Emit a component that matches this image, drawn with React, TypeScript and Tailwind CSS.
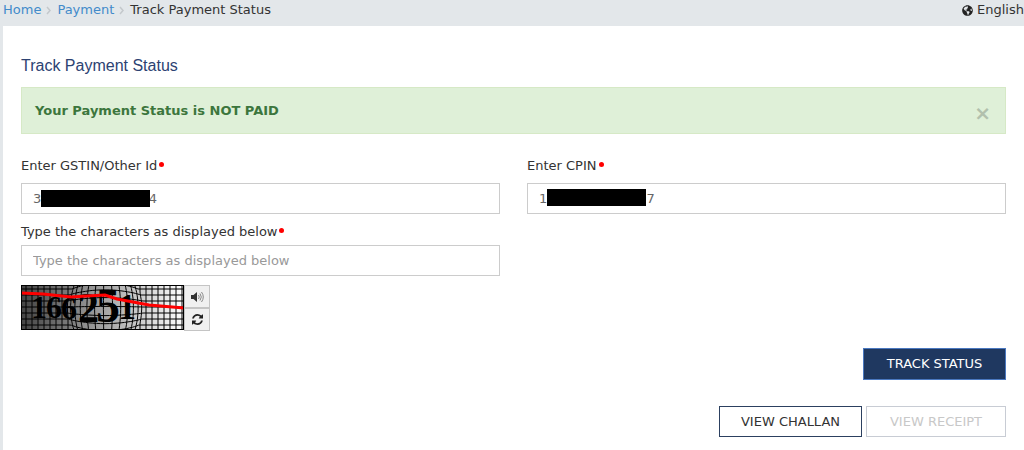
import * as React from "react";
import { FaGlobeAmericas } from "react-icons/fa";

const CAPTCHA_WIDTH = 163;
const CAPTCHA_HEIGHT = 45;
const CELL = 6;

// Bulges a grid point away from the lens in the middle of the captcha.
function warp(x: number, y: number): string {
  const dx = x - 84;
  const dy = y - 23;
  const distance = Math.hypot(dx, dy);
  const radius = 38;
  if (distance >= radius) return `${x},${y}`;
  const push = 1 + 0.6 * (1 - distance / radius);
  return `${(84 + dx * push).toFixed(1)},${(23 + dy * push).toFixed(1)}`;
}

function gridLines(): string[] {
  const lines: string[] = [];
  for (let x = 5; x < CAPTCHA_WIDTH; x += CELL) {
    const points: string[] = [];
    for (let y = 0; y <= CAPTCHA_HEIGHT; y += 3) points.push(warp(x, y));
    lines.push(points.join(" "));
  }
  for (let y = 4; y < CAPTCHA_HEIGHT; y += CELL) {
    const points: string[] = [];
    for (let x = 0; x <= CAPTCHA_WIDTH; x += 3) points.push(warp(x, y));
    lines.push(points.join(" "));
  }
  return lines;
}

const glyphs = [
  { char: "1", x: 10, y: 33, size: 32 },
  { char: "6", x: 25, y: 33, size: 32 },
  { char: "6", x: 40, y: 34, size: 32 },
  { char: "2", x: 57, y: 37, size: 42 },
  { char: "5", x: 75, y: 37, size: 48 },
  { char: "1", x: 97, y: 34, size: 36 },
];

function CaptchaImage() {
  return (
    <svg
      role="img"
      aria-label="Captcha"
      className="overflow-visible"
      width={CAPTCHA_WIDTH}
      height={CAPTCHA_HEIGHT}
      viewBox={`0 0 ${CAPTCHA_WIDTH} ${CAPTCHA_HEIGHT}`}
    >
      <defs>
        <linearGradient id="captcha-shade">
          <stop offset="0" stopColor="#444" />
          <stop offset="1" stopColor="#fff" />
        </linearGradient>
        <clipPath id="captcha-frame">
          <rect width="163" height="45" />
        </clipPath>
      </defs>
      <rect width="163" height="45" fill="url(#captcha-shade)" />
      <g clipPath="url(#captcha-frame)">
        {gridLines().map((points) => (
          <polyline key={points} points={points} fill="none" stroke="#000" />
        ))}
      </g>
      {glyphs.map((glyph) => (
        <text
          key={glyph.x}
          x={glyph.x}
          y={glyph.y}
          fontSize={glyph.size}
          fontFamily="'Liberation Serif', serif"
          fontWeight="bold"
        >
          {glyph.char}
        </text>
      ))}
      <path
        d="M0 8 L22 9 L50 12 L66 11 L84 10 L96 14 L112 17 L128 20 L163 23"
        fill="none"
        stroke="#f00"
        strokeWidth="3"
      />
      <rect x="0.5" y="0.5" width="162" height="44" fill="none" stroke="#000" />
    </svg>
  );
}

function VolumeIcon() {
  return (
    <svg className="size-[14px]" viewBox="0 0 14 14" fill="none" aria-hidden="true">
      <path d="M1 5h2.5L7 2v10L3.500 9H1z" fill="#333" />
      <path d="M8.500 5q1.500 2 0 4M10 3.500q2.600 3.500 0 7M11.500 2q3.600 5 0 10" stroke="#888" />
    </svg>
  );
}

function RefreshIcon() {
  return (
    <svg className="size-[11px]" viewBox="0 0 1536 1536" fill="#222" aria-hidden="true">
      <path d="M1511 928q0 5-1 7-64 268-268 434.500t-478 166.500q-146 0-282.500-55t-243.500-157l-129 129q-19 19-45 19t-45-19-19-45v-448q0-26 19-45t45-19h448q26 0 45 19t19 45-19 45l-137 137q71 66 161 102t187 36q134 0 250-65t186-179q11-17 53-117 8-23 30-23h192q13 0 22.500 9.500t9.500 22.500zm25-800v448q0 26-19 45t-45 19h-448q-26 0-45-19t-19-45 19-45l138-138q-148-137-349-137-134 0-250 65t-186 179q-11 17-53 117-8 23-30 23h-199q-13 0-22.500-9.500t-9.500-22.500v-7q65-268 270-434.500t480-166.500q146 0 284 55.500t245 156.500l130-129q19-19 45-19t45 19 19 45z" />
    </svg>
  );
}

function Separator() {
  return (
    <svg className="mx-[5px] h-5 w-1.5" viewBox="0 0 6 20" fill="none" aria-hidden="true">
      <path d="M1 7l3 3.500L1 14" stroke="#c4c8cc" strokeWidth="1.500" />
    </svg>
  );
}

function Field({
  id,
  label,
  children,
}: {
  id: string;
  label: string;
  children: React.ReactNode;
}) {
  return (
    <div>
      <label htmlFor={id} className="flex h-5 items-center gap-0.5">
        {label}
        <span className="mb-1 size-[5px] rounded-full bg-[#f00]" />
      </label>
      {children}
    </div>
  );
}

const inputClass =
  "block h-[31px] w-full border border-[#ccc] bg-white px-[11px] text-[#666] placeholder:text-[#999]";

const captchaButtonClass =
  "flex h-[23px] w-[26px] items-center justify-center border border-[#c4c4c4] bg-[#f0f0f0]";

export default function App() {
  return (
    <div className="min-h-screen bg-[#e3e7ea] font-['DejaVu_Sans',sans-serif] text-[13px] leading-5 text-[#333]">
      <header className="flex h-[26px] items-start justify-between pl-[3px]">
        <nav aria-label="Breadcrumb" className="flex">
          <a href="#home" className="text-[#428bca]">
            Home
          </a>
          <Separator />
          <a href="#payment" className="text-[#428bca]">
            Payment
          </a>
          <Separator />
          <span>Track Payment Status</span>
        </nav>
        <a href="#language" className="flex items-center gap-1">
          <FaGlobeAmericas className="size-[11px] text-[#222]" />
          English
        </a>
      </header>

      <main className="ml-[3px] min-h-[424px] bg-white px-[18px] pt-7">
        <h1 className="font-['Liberation_Sans',sans-serif] text-base leading-6 text-[#2c4272]">
          Track Payment Status
        </h1>
        <div
          role="alert"
          className="mt-[9px] flex h-[47px] items-center justify-between border border-[#d6e9c6] bg-[#dff0d8] pr-3.5 pl-[13px] text-[#3c763d]"
        >
          <strong>Your Payment Status is NOT PAID</strong>
          <button type="button" aria-label="Close" className="pt-1 text-xl font-bold text-[#b2c0ad]">
            ×
          </button>
        </div>

        <form onSubmit={(event) => event.preventDefault()}>
          <div className="mt-[22px] grid grid-cols-2 gap-x-[27px]">
            <Field id="gstin" label="Enter GSTIN/Other Id">
              <div className="relative mt-[7px]">
                <input id="gstin" className={inputClass} defaultValue="300000000000004" />
                <span className="absolute top-[7px] left-5 h-[17px] w-[109px] bg-black" />
              </div>
            </Field>
            <Field id="cpin" label="Enter CPIN">
              <div className="relative mt-[7px]">
                <input id="cpin" className={inputClass} defaultValue="10000000000007" />
                <span className="absolute top-1.5 left-5 h-[17px] w-[99px] bg-black" />
              </div>
            </Field>
            <div className="mt-2">
              <Field id="captcha" label="Type the characters as displayed below">
                <div className="mt-[3px]">
                  <input
                    id="captcha"
                    className={inputClass}
                    placeholder="Type the characters as displayed below"
                  />
                </div>
              </Field>
            </div>
          </div>

          <div className="mt-[9px] flex">
            <CaptchaImage />
            <div className="flex flex-col">
              <button type="button" aria-label="Play audio" className={captchaButtonClass}>
                <VolumeIcon />
              </button>
              <button type="button" aria-label="Refresh" className={captchaButtonClass}>
                <RefreshIcon />
              </button>
            </div>
          </div>

          <div className="mt-[17px] flex justify-end">
            <button
              type="submit"
              className="h-8 w-[143px] border border-[#4a78c0] bg-[#1f3860] text-white"
            >
              TRACK STATUS
            </button>
          </div>
          <div className="mt-[26px] flex justify-end gap-1">
            <button type="button" className="h-[31px] w-[143px] border border-[#2c4060]">
              VIEW CHALLAN
            </button>
            <button
              type="button"
              disabled
              className="h-[31px] w-[140px] border border-[#c8ccd4] text-[#c8c8c8]"
            >
              VIEW RECEIPT
            </button>
          </div>
        </form>
      </main>
    </div>
  );
}
